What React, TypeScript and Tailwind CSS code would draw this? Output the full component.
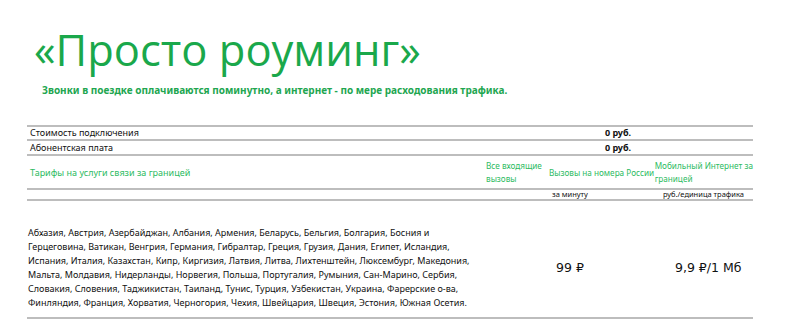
import React from "react";

const countries =
  "Абхазия, Австрия, Азербайджан, Албания, Армения, Беларусь, Бельгия, Болгария, Босния и Герцеговина, Ватикан, Венгрия, Германия, Гибралтар, Греция, Грузия, Дания, Египет, Исландия, Испания, Италия, Казахстан, Кипр, Киргизия, Латвия, Литва, Лихтенштейн, Люксембург, Македония, Мальта, Молдавия, Нидерланды, Норвегия, Польша, Португалия, Румыния, Сан-Марино, Сербия, Словакия, Словения, Таджикистан, Таиланд, Тунис, Турция, Узбекистан, Украина, Фарерские о-ва, Финляндия, Франция, Хорватия, Черногория, Чехия, Швейцария, Швеция, Эстония, Южная Осетия.";

export default function App() {
  return (
    <div
      className="w-[785px] h-[325px] bg-white overflow-hidden text-[#111]"
      style={{ fontFamily: '"Noto Sans", "Open Sans", sans-serif' }}
    >
      <div className="pl-[34px] pt-[26px]">
        <h1
          className="text-[43.5px] leading-[48px] text-[#1aa84b] font-normal"
          style={{ fontFamily: '"Open Sans", "Noto Sans", sans-serif' }}
        >
          «Просто роуминг»
        </h1>
        <p className="pl-[8px] mt-[10px] text-[10px] leading-[13px] font-bold text-[#22a650]">
          Звонки в поездке оплачиваются поминутно, а интернет - по мере расходования трафика.
        </p>
      </div>

      <div className="ml-[27px] mt-[28px] w-[726px] text-[9px]">
        <div className="h-[2px] bg-[#bdbdbd]" />
        <div className="flex h-[12px] items-center">
          <div className="w-[458px] pl-[3px]">Стоимость подключения</div>
          <div className="flex-1 text-center font-bold pr-[2px]">0 руб.</div>
        </div>
        <div className="h-[2px] bg-[#bdbdbd]" />
        <div className="flex h-[13px] items-center">
          <div className="w-[458px] pl-[3px]">Абонентская плата</div>
          <div className="flex-1 text-center font-bold pr-[2px]">0 руб.</div>
        </div>
        <div className="h-[2px] bg-[#bdbdbd]" />
        <div className="flex h-[32px] items-center text-[#2dbb62] leading-[13px]">
          <div className="w-[458px] pl-[3px]">Тарифы на услуги связи за границей</div>
          <div className="w-[65px] pl-[2px] text-[8.2px]">Все входящие вызовы</div>
          <div className="w-[106px] whitespace-nowrap text-[8.2px]">Вызовы на номера России</div>
          <div className="flex-1 whitespace-nowrap text-[8.2px]">
            Мобильный Интернет за
            <br />
            границей
          </div>
        </div>
        <div className="h-[2px] bg-[#bdbdbd]" />
        <div className="flex h-[9px] items-center text-[7.5px]">
          <div className="w-[458px]" />
          <div className="w-[65px]" />
          <div className="w-[106px] pl-[2px]">за минуту</div>
          <div className="flex-1 text-right pr-[9px]">руб./единица трафика</div>
        </div>
        <div className="h-[2px] bg-[#bdbdbd]" />
        <div className="flex h-[116px] items-center pt-[18px]">
          <div className="w-[458px] pl-[1px] leading-[14px]">{countries}</div>
          <div className="w-[65px]" />
          <div
            className="w-[106px] pl-[6px] text-[12.5px]"
            style={{ fontFamily: '"DejaVu Sans", sans-serif' }}
          >
            99 ₽
          </div>
          <div
            className="flex-1 pl-[19px] text-[12.5px]"
            style={{ fontFamily: '"DejaVu Sans", sans-serif' }}
          >
            9,9 ₽/1 Мб
          </div>
        </div>
        <div className="h-[2px] bg-[#bdbdbd]" />
      </div>
    </div>
  );
}
